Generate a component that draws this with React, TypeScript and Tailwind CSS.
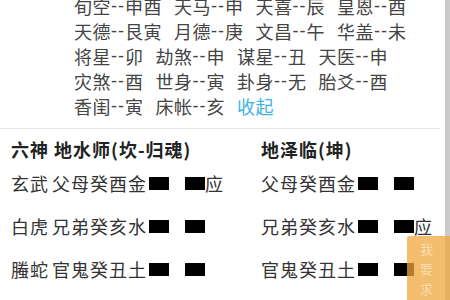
const shensha: string[][] = [
  ["旬空--申酉", "天马--申", "天喜--辰", "皇恩--酉"],
  ["天德--艮寅", "月德--庚", "文昌--午", "华盖--未"],
  ["将星--卯", "劫煞--申", "谋星--丑", "天医--申"],
  ["灾煞--酉", "世身--寅", "卦身--无", "胎爻--酉"],
  ["香闺--寅", "床帐--亥"],
];

type Yao = { god: string; left: string; leftMark?: string; right: string; rightMark?: string };

const yaos: Yao[] = [
  { god: "玄武", left: "父母癸酉金", leftMark: "应", right: "父母癸酉金" },
  { god: "白虎", left: "兄弟癸亥水", right: "兄弟癸亥水", rightMark: "应" },
  { god: "螣蛇", left: "官鬼癸丑土", right: "官鬼癸丑土" },
  { god: "勾陈", left: "妻财戊午火", leftMark: "世", right: "官鬼丁丑土" },
];

function YinLine() {
  return (
    <span className="flex items-center ml-[2px]">
      <span className="inline-block w-[20px] h-[13px] bg-black" />
      <span className="inline-block w-[20px] h-[13px] bg-black ml-[16px]" />
    </span>
  );
}

function Sha({ text }: { text: string }) {
  const [name, value] = text.split("--");
  return (
    <span className="flex items-center">
      <span>{name}</span>
      <span className="font-['Liberation_Sans',sans-serif] tracking-[1px] leading-[25px]">--</span>
      <span>{value}</span>
    </span>
  );
}

export default function App() {
  return (
    <div className="relative w-[450px] h-[300px] overflow-hidden flex bg-white font-['Noto_Sans_CJK_SC','Noto_Sans',sans-serif]">
      <div className="flex-1 min-w-0">
        {/* 神煞 */}
        <div className="-mt-[6px] pl-[74px] pb-[9px] text-[18px] leading-[25px] tracking-[0.5px] text-[#444]">
          {shensha.map((line, i) => (
            <div key={i} className="flex items-center h-[25px] gap-[12px] whitespace-nowrap">
              {line.map((s) => (
                <Sha key={s} text={s} />
              ))}
              {i === shensha.length - 1 && <span className="text-[#3db2e3]">收起</span>}
            </div>
          ))}
        </div>
        <div className="h-px bg-[#e6e6e6] mr-[5px]" />

        {/* 卦象 */}
        <div className="pl-[11px] pt-[8px] text-[18px] tracking-[1px]">
          <div className="grid grid-cols-[250px_1fr] leading-[25px] font-bold text-[#222]">
            <span>六神 地水师(坎-归魂)</span>
            <span>地泽临(坤)</span>
          </div>
          {yaos.map((y) => (
            <div key={y.god} className="grid grid-cols-[250px_1fr] h-[43px] items-center text-[#333]">
              <div className="flex items-center whitespace-nowrap">
                <span className="mr-[3px]">{y.god}</span>
                <span>{y.left}</span>
                <YinLine />
                {y.leftMark && <span>{y.leftMark}</span>}
              </div>
              <div className="flex items-center whitespace-nowrap">
                <span>{y.right}</span>
                <YinLine />
                {y.rightMark && <span>{y.rightMark}</span>}
              </div>
            </div>
          ))}
        </div>
      </div>

      {/* 滚动条 */}
      <div className="w-[5px] bg-[#cacaca]" />

      {/* 悬浮按钮 */}
      <div className="absolute left-[407px] top-[236px] right-0 bottom-0 bg-[#f0a53c]/75 rounded-tl-[2px] flex flex-col items-center pt-[3px] pr-[4px] text-[13px] leading-[20px] text-[#fbdcaa]">
        <span>我</span>
        <span>要</span>
        <span>求</span>
        <span>签</span>
      </div>
    </div>
  );
}
